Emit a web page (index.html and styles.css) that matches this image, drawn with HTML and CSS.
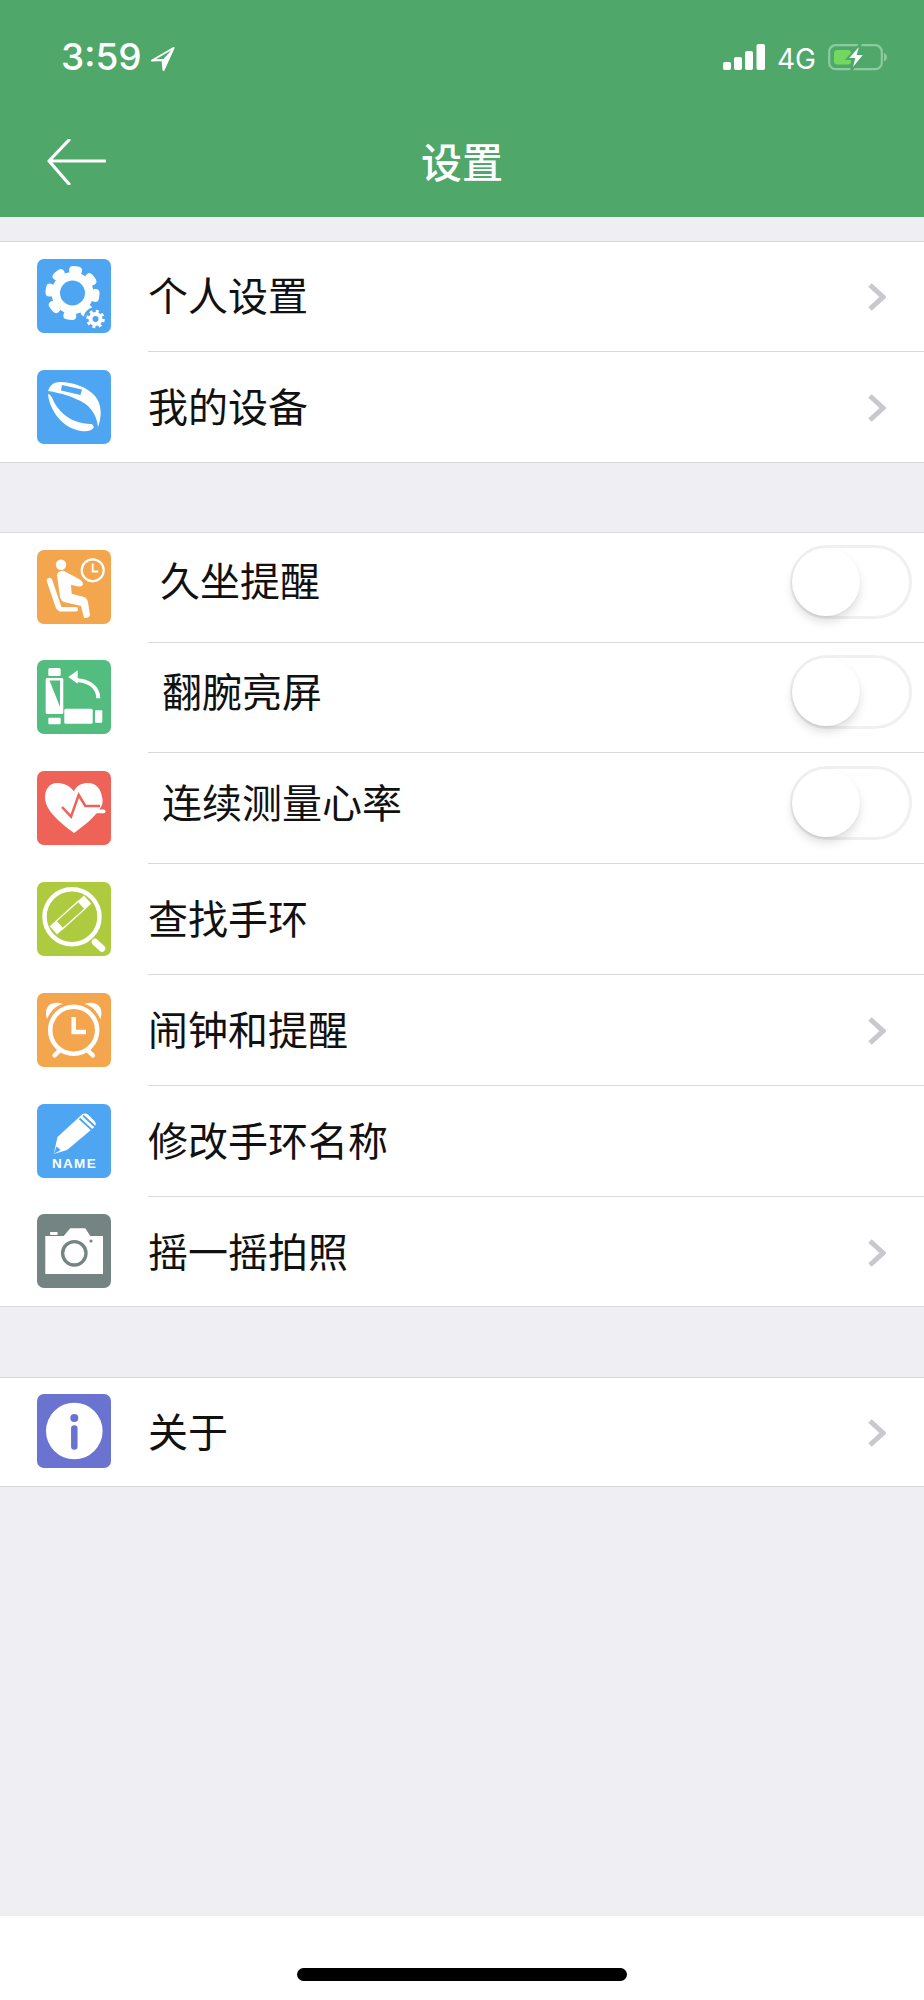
FILE: index.html
```html
<!DOCTYPE html>
<html lang="zh">
<head>
<meta charset="utf-8">
<title>设置</title>
<link rel="stylesheet" href="styles.css">
</head>
<body>
<div class="app">
  <header class="header">
    <div class="status">
      <div class="status-left">
        <span class="time">3:59</span>
        <svg class="loc" viewBox="0 0 25 24"><path d="M23.500 1 2 13.500 12.500 13 13.500 23Z" fill="none" stroke="#fff" stroke-width="2" stroke-linejoin="round"/><path d="M23.500 1 12.500 13 13.500 23Z" fill="#fff"/></svg>
      </div>
      <div class="status-right">
        <svg class="signal" viewBox="0 0 42 26"><rect x="0" y="18" width="8" height="8" rx="2" fill="#fff"/><rect x="11" y="13" width="8" height="13" rx="2" fill="#fff"/><rect x="22" y="7" width="8" height="19" rx="2" fill="#fff"/><rect x="33.500" y="0" width="8.500" height="26" rx="2" fill="#fff"/></svg>
        <span class="net">4G</span>
        <svg class="battery" viewBox="0 0 60 28"><rect x="1.200" y="2.200" width="52.600" height="24" rx="6.500" fill="none" stroke="#8ccaa0" stroke-width="2.200"/><path d="M56 10c2 1 3 2.400 3 4.200s-1 3.200-3 4.200z" fill="#8ccaa0"/><rect x="6" y="7" width="17" height="14.500" rx="3" fill="#72d85f"/><path d="M33 0 19 16h7l-3 12 14-17h-7z" fill="#fff" stroke="#4fa76a" stroke-width="2"/></svg>
      </div>
    </div>
    <nav class="nav">
      <svg class="back" viewBox="0 0 60 46"><path d="M59 22H3M23 1 3 22l20 23" fill="none" stroke="#fff" stroke-width="3.200" stroke-linecap="round" stroke-linejoin="round"/></svg>
      <h1 class="title">设置</h1>
      <span class="nav-spacer"></span>
    </nav>
  </header>

  <main class="main">
    <section class="group">
      <div class="row">
        <svg class="icon" viewBox="0 0 74 74"><rect width="74" height="74" rx="7" fill="#4ea5f2"/><circle cx="35.500" cy="34" r="21" fill="#fff"/><circle cx="35.500" cy="34" r="23" fill="none" stroke="#fff" stroke-width="8" stroke-linecap="round" stroke-dasharray="5 13.060"/><circle cx="35.500" cy="34" r="12.500" fill="#4ea5f2"/><circle cx="58.500" cy="60" r="12" fill="#4ea5f2"/><circle cx="58.500" cy="60" r="7" fill="#fff"/><circle cx="58.500" cy="60" r="7.800" fill="none" stroke="#fff" stroke-width="3" stroke-dasharray="3 3.130"/><circle cx="58.500" cy="60" r="3" fill="#4ea5f2"/></svg>
        <div class="row-body"><span class="label">个人设置</span><svg class="chevron" viewBox="0 0 19 30"><path d="M3 3l13 12L3 27" fill="none" stroke="#c8c8cd" stroke-width="5"/></svg></div>
      </div>
      <div class="row">
        <svg class="icon" viewBox="0 0 74 74"><rect width="74" height="74" rx="7" fill="#4ea5f2"/><path d="M11 21C13 15 17 12 23 12 36 12 50 17 58 26 65 34 65 47 61 57 60 47 55 38 47 33 37 27 24 23 11 21z" fill="#fff"/><path d="M25 15l20 4.500-1.500 5.500-19.500-4.500z" fill="#4ea5f2"/><path d="M11 24C12 38 24 58 44 61 50 62 55 61 57 57L55 54C43 54 27 50 17 32 15 27 13 24 11 24z" fill="#fff"/></svg>
        <div class="row-body"><span class="label">我的设备</span><svg class="chevron" viewBox="0 0 19 30"><path d="M3 3l13 12L3 27" fill="none" stroke="#c8c8cd" stroke-width="5"/></svg></div>
      </div>
    </section>

    <section class="group">
      <div class="row">
        <svg class="icon" viewBox="0 0 74 74"><rect width="74" height="74" rx="7" fill="#f3a64e"/><circle cx="24" cy="14.700" r="5.200" fill="#fff"/><path d="M20 25Q22 20 27 21L42 29Q47 32 45.700 35 44 37 41 36.500L34 34.700 34.700 43.700 47 47Q50 48 51 52L53 65Q52 68.500 47 68L44 56 27 52Q24 51 23 47z" fill="#fff"/><path d="M12.500 30.500 21.500 57" fill="none" stroke="#fff" stroke-width="5.500" stroke-linecap="round"/><rect x="21" y="57" width="20" height="4.500" rx="2" fill="#fff"/><circle cx="55.700" cy="20.300" r="11" fill="#f3a64e" stroke="#fff" stroke-width="2.200"/><path d="M55.700 13.500V21.500h5.500" fill="none" stroke="#fff" stroke-width="1.800"/></svg>
        <div class="row-body row-raised"><span class="label label-indent-a">久坐提醒</span><span class="toggle"><span class="knob"></span></span></div>
      </div>
      <div class="row">
        <svg class="icon" viewBox="0 0 74 74"><rect width="74" height="74" rx="7" fill="#52bd7f"/><rect x="11.300" y="8" width="12.400" height="8" rx="1.500" fill="#fff"/><rect x="8.700" y="18" width="17.600" height="36" rx="1.500" fill="#fff"/><path d="M12.500 20.500h10.500V47z" fill="#52bd7f"/><rect x="11.300" y="57.700" width="12.400" height="6.600" rx="1" fill="#fff"/><rect x="27.300" y="48.700" width="28.400" height="15" rx="1.500" fill="#fff"/><rect x="58" y="50.300" width="7.300" height="12.400" rx="1" fill="#fff"/><path d="M61.300 38.300C61 27 52 21 39 20" fill="none" stroke="#fff" stroke-width="4"/><path d="M31.300 17 40.700 10.300v13.400z" fill="#fff"/></svg>
        <div class="row-body row-raised"><span class="label label-indent-b">翻腕亮屏</span><span class="toggle"><span class="knob"></span></span></div>
      </div>
      <div class="row">
        <svg class="icon" viewBox="0 0 74 74"><rect width="74" height="74" rx="7" fill="#ee6257"/><path d="M36.700 20C32 14 26 12 20 12 12 12 8 19 8 26c0 14 16 26 29 36 11-8 22-17 27-26 2-4 2-7 1-10-1-8-6-14-14-14-6 0-11 2-14 8z" fill="#fff"/><rect x="49" y="38.500" width="19.500" height="3.800" rx="1.900" fill="#fff"/><path d="M25 36l9 9.700L41.700 24l6.600 11H63" fill="none" stroke="#ee6257" stroke-width="2.500"/></svg>
        <div class="row-body row-raised"><span class="label label-indent-b">连续测量心率</span><span class="toggle"><span class="knob"></span></span></div>
      </div>
      <div class="row">
        <svg class="icon" viewBox="0 0 74 74"><rect width="74" height="74" rx="7" fill="#aecb3f"/><circle cx="35" cy="34.700" r="27.500" fill="none" stroke="#fff" stroke-width="4.500"/><path d="M58 60l7 6.500" stroke="#fff" stroke-width="6.500" stroke-linecap="round"/><g transform="rotate(-42 33.500 33)"><rect x="10.500" y="27.500" width="8" height="11" fill="#fff"/><rect x="48.500" y="27.500" width="8" height="11" fill="#fff"/><rect x="18.500" y="28" width="30" height="10" fill="none" stroke="#fff" stroke-width="1.300"/></g></svg>
        <div class="row-body"><span class="label">查找手环</span></div>
      </div>
      <div class="row">
        <svg class="icon" viewBox="0 0 74 74"><rect width="74" height="74" rx="7" fill="#f3a64e"/><path d="M10 26C6 14 14 7 26 11 18 13 14 18 10 26zM63.400 26C67.400 14 59.400 7 47.400 11 55.400 13 59.400 18 63.400 26z" fill="#fff"/><circle cx="36.700" cy="37.300" r="23.500" fill="none" stroke="#fff" stroke-width="4.500"/><path d="M36.700 24v15H49" fill="none" stroke="#fff" stroke-width="4.500"/><path d="M22 58l-4.500 4.500M51.400 58l4.500 4.500" stroke="#fff" stroke-width="4.500" stroke-linecap="round"/></svg>
        <div class="row-body"><span class="label">闹钟和提醒</span><svg class="chevron" viewBox="0 0 19 30"><path d="M3 3l13 12L3 27" fill="none" stroke="#c8c8cd" stroke-width="5"/></svg></div>
      </div>
      <div class="row">
        <svg class="icon" viewBox="0 0 74 74"><rect width="74" height="74" rx="7" fill="#4ea5f2"/><path d="M16.700 50 20.500 33 45 10.500Q48 8.500 51 10.500L57.500 17Q60 20 57.500 23L30 46z" fill="#fff"/><path d="M42.500 14.500l13 12M46 11.500l13 12" stroke="#4ea5f2" stroke-width="1.800"/><path d="M16.700 50l2.800-7.500 4.200 3.500z" fill="#4ea5f2"/><text class="icon-name" x="37.500" y="63.500" text-anchor="middle">NAME</text></svg>
        <div class="row-body"><span class="label">修改手环名称</span></div>
      </div>
      <div class="row">
        <svg class="icon" viewBox="0 0 74 74"><rect width="74" height="74" rx="7" fill="#748482"/><path d="M9.300 22H26.700L33.300 14.300H48.300L53.300 22H66V60H8.300V22z" fill="#fff"/><rect x="13" y="18" width="7.700" height="3" rx="1" fill="#fff"/><circle cx="37.300" cy="39.300" r="11.700" fill="#fff" stroke="#748482" stroke-width="3.300"/><circle cx="54" cy="27" r="1.600" fill="#748482"/></svg>
        <div class="row-body"><span class="label">摇一摇拍照</span><svg class="chevron" viewBox="0 0 19 30"><path d="M3 3l13 12L3 27" fill="none" stroke="#c8c8cd" stroke-width="5"/></svg></div>
      </div>
    </section>

    <section class="group">
      <div class="row">
        <svg class="icon" viewBox="0 0 74 74"><rect width="74" height="74" rx="7" fill="#6a73cf"/><circle cx="37.300" cy="37" r="28.300" fill="#fff"/><circle cx="37.300" cy="24" r="4" fill="#6a73cf"/><path d="M37.300 34.500v18" stroke="#6a73cf" stroke-width="6.500" stroke-linecap="round"/></svg>
        <div class="row-body"><span class="label">关于</span><svg class="chevron" viewBox="0 0 19 30"><path d="M3 3l13 12L3 27" fill="none" stroke="#c8c8cd" stroke-width="5"/></svg></div>
      </div>
    </section>
  </main>

  <footer class="footer"><span class="home-bar"></span></footer>
</div>
</body>
</html>
```

FILE: styles.css
```css
* { box-sizing: border-box; }

html, body { margin: 0; padding: 0; }

body {
  font-family: "Noto Sans CJK SC", "Noto Sans", sans-serif;
  color: #111;
  background: #eeeef3;
}

.app {
  display: flex;
  flex-direction: column;
  width: 924px;
  height: 2000px;
  overflow: hidden;
}

.header {
  flex: none;
  height: 217px;
  background: #4fa76a;
  color: #fff;
}

.status {
  display: flex;
  align-items: center;
  justify-content: space-between;
  height: 113px;
  padding: 0 36px 0 61px;
}

.status-left,
.status-right {
  display: flex;
  align-items: center;
}

.status-left { gap: 8px; }

.status-right { gap: 12px; }

.time {
  font-family: Inter, "Liberation Sans", sans-serif;
  font-size: 37px;
  font-weight: 500;
  line-height: 1;
}

.loc {
  width: 25px;
  height: 24px;
  margin-top: 4px;
}

.signal {
  width: 42px;
  height: 26px;
}

.net {
  font-family: Inter, "Liberation Sans", sans-serif;
  font-size: 28px;
  line-height: 1;
  margin-top: 4px;
}

.battery {
  width: 60px;
  height: 28px;
}

.nav {
  display: grid;
  grid-template-columns: 1fr auto 1fr;
  align-items: center;
  height: 104px;
  padding: 0 46px 4px;
}

.back {
  width: 60px;
  height: 46px;
  margin-bottom: 2px;
}

.title {
  margin: 0 0 5px;
  font-size: 41px;
  font-weight: 500;
  line-height: 1.2;
}

.main {
  flex: 1;
  display: flex;
  flex-direction: column;
  gap: 69.2px;
  padding-top: 24px;
  background: #eeeef3;
}

.group {
  background: #fff;
  box-shadow: inset 0 1px #d9d9dd, inset 0 -1px #d9d9dd;
}

.row {
  display: flex;
  align-items: center;
  height: 110.8px;
  padding-left: 37px;
}

.icon {
  flex: none;
  width: 74px;
  height: 74px;
  margin: 0 37px 1px 0;
}

.icon-name {
  font-family: "Liberation Sans", sans-serif;
  font-size: 13.5px;
  font-weight: 700;
  letter-spacing: 1.3px;
  fill: #fff;
}

.row-body {
  flex: 1;
  display: flex;
  align-items: center;
  justify-content: space-between;
  height: 100%;
  padding-right: 38px;
  border-bottom: 1px solid #d9d9dd;
}

.row:last-child .row-body { border-bottom: 0; }

.row-raised {
  padding-right: 12px;
  padding-bottom: 11px;
}

.label {
  margin-bottom: 4px;
  font-size: 40px;
  line-height: 1.2;
  white-space: nowrap;
}

.label-indent-a { margin-left: 12px; }

.label-indent-b { margin-left: 14px; }

.chevron {
  flex: none;
  width: 19px;
  height: 30px;
  margin-top: 2px;
}

.toggle {
  display: flex;
  align-items: center;
  flex: none;
  width: 122px;
  height: 74px;
  margin-top: 1px;
  padding-left: 2px;
  background: #fff;
  border: 3px solid #f0f0f1;
  border-radius: 37px;
}

.knob {
  width: 68px;
  height: 68px;
  margin-left: -3px;
  background: #fff;
  border-radius: 50%;
  box-shadow: 0 6px 10px rgba(0, 0, 0, 0.12), 0 1px 2px rgba(0, 0, 0, 0.06);
}

.footer {
  flex: none;
  display: flex;
  justify-content: center;
  height: 84px;
  padding-top: 52px;
  background: #fff;
}

.home-bar {
  width: 330px;
  height: 13px;
  background: #000;
  border-radius: 7px;
}
```
